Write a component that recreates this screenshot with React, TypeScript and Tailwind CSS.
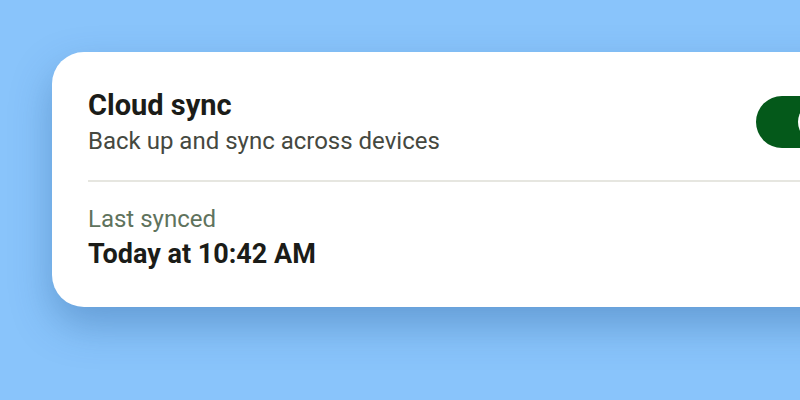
import { useState } from 'react'

export default function App() {
  const [on, setOn] = useState(true)

  return (
    <div className="w-[800px] h-[400px] overflow-hidden bg-[#89c4fb] pt-[52px] pl-[52px]" style={{ fontFamily: 'Roboto, "Noto Sans", sans-serif' }}>
      <div className="w-[828px] rounded-[32px] bg-white px-9 pt-[35px] pb-[36px] shadow-[0_18px_40px_rgba(30,80,140,0.35)]">
        <div className="flex items-center justify-between">
          <div>
            <h2 className="text-[29px] leading-[36px] font-bold text-[#1b1c18]">Cloud sync</h2>
            <p className="text-[24px] leading-[32px] text-[#45483f] mt-[2px]">Back up and sync across devices</p>
          </div>
          <button onClick={() => setOn(!on)}
            className={`w-[88px] h-[52px] rounded-full flex items-center px-[6px] ${on ? 'bg-[#04591a] justify-end' : 'bg-gray-300 justify-start'}`}>
            <span className="w-[40px] h-[40px] rounded-full bg-white" />
          </button>
        </div>
        <div className="h-[2px] bg-[#e6e6e0] mt-[23px]" />
        <div className="mt-[22px]">
          <p className="text-[24px] leading-[30px] text-[#5f735d]">Last synced</p>
          <p className="text-[27px] leading-[34px] font-bold text-[#1b1c18] mt-[3px]">Today at 10:42 AM</p>
        </div>
      </div>
    </div>
  )
}
